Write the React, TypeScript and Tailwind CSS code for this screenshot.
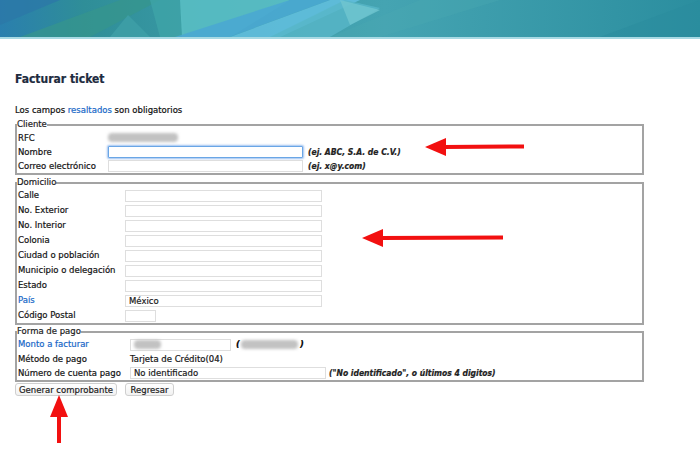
import React from "react";

const font = { fontFamily: '"DejaVu Sans", "Liberation Sans", sans-serif' };
const cond = { fontFamily: '"DejaVu Sans Condensed", "DejaVu Sans", sans-serif' };

function Blur({ w, className = "" }: { w: number; className?: string }) {
  return (
    <span
      className={"inline-block h-[9px] bg-[#c2c2c2] blur-[1.5px] rounded-sm " + className}
      style={{ width: w }}
    />
  );
}

function Banner() {
  return (
    <div className="relative h-[39px] w-full">
      <svg width="700" height="37" viewBox="0 0 700 37" preserveAspectRatio="none" className="block">
        <defs>
          <linearGradient id="bg" x1="0" y1="0" x2="1" y2="0">
            <stop offset="0" stopColor="#2a7fae" />
            <stop offset="0.12" stopColor="#2f8e98" />
            <stop offset="0.3" stopColor="#3a9aa6" />
            <stop offset="0.55" stopColor="#45a4b2" />
            <stop offset="1" stopColor="#2b8e9f" />
          </linearGradient>
        </defs>
        <rect x="0" y="0" width="700" height="37" fill="url(#bg)" />
        <polygon points="0,0 60,0 0,25" fill="#2c78a8" opacity="0.8" />
        <polygon points="20,37 120,0 160,0 90,37" fill="#36968c" opacity="0.7" />
        <polygon points="110,37 128,15 150,37" fill="#3fa0a8" opacity="0.8" />
        <polygon points="150,0 180,0 185,37 160,37" fill="#3ea4a8" opacity="0.8" />
        <polygon points="180,0 290,0 230,37 182,37" fill="#5bbfc6" opacity="0.85" />
        <polygon points="175,37 290,0 330,0 230,37" fill="#4aa9d2" opacity="0.9" />
        <polygon points="230,37 330,0 360,0 280,37" fill="#63c0df" opacity="0.85" />
        <polygon points="270,37 345,0 380,8 330,37" fill="#58b7c8" opacity="0.8" />
        <polygon points="340,0 380,10 350,25" fill="#70c6cf" opacity="0.8" />
        <polygon points="330,37 420,0 500,0 380,37" fill="#4aa8b2" opacity="0.35" />
        <polygon points="600,37 700,0 700,37" fill="#2a8c9e" opacity="0.5" />
      </svg>
      <div className="h-[2px] w-full bg-[#a8dae4]" />
    </div>
  );
}

function Input({ w, focus = false, children }: { w: number; focus?: boolean; children?: React.ReactNode }) {
  return (
    <div
      className={
        "h-[12px] flex items-center px-[3px] text-[8.5px] leading-[10px] text-[#1a1a1a] bg-white " +
        (focus
          ? "border border-[#6aa6e6] shadow-[0_0_2px_1px_rgba(90,150,230,0.6)] rounded-[1px]"
          : "border border-[#dedede]")
      }
      style={{ width: w }}
    >
      {children}
    </div>
  );
}

function Row({
  label,
  labelW,
  h = 15,
  blue = false,
  className = "items-center",
  children,
}: {
  label: string;
  labelW: number;
  h?: number;
  blue?: boolean;
  className?: string;
  children?: React.ReactNode;
}) {
  return (
    <div className={"flex " + className} style={{ height: h }}>
      <div
        className={"shrink-0 pl-[1px] " + (blue ? "text-[#1868c8]" : "text-[#141414]")}
        style={{ width: labelW }}
      >
        {label}
      </div>
      {children}
    </div>
  );
}

function Hint({ children, className = "" }: { children: React.ReactNode; className?: string }) {
  return (
    <span className={"italic font-semibold text-[#222] text-[8.5px] " + className} style={cond}>
      {children}
    </span>
  );
}

function Arrow({ x, y, len, dir }: { x: number; y: number; len: number; dir: "left" | "up" }) {
  if (dir === "left") {
    return (
      <svg className="absolute" style={{ left: x, top: y - 10 }} width={len} height={20} viewBox={`0 0 ${len} 20`}>
        <line x1="18" y1="10" x2={len} y2="9.5" stroke="#f21010" strokeWidth="4" />
        <polygon points="0,10 21,1 21,19" fill="#f21010" />
      </svg>
    );
  }
  return (
    <svg className="absolute" style={{ left: x - 10, top: y }} width={20} height={len} viewBox={`0 0 20 ${len}`}>
      <line x1="10" y1="18" x2="10" y2={len} stroke="#f21010" strokeWidth="4" />
      <polygon points="10,0 1,22 19,22" fill="#f21010" />
    </svg>
  );
}

export default function App() {
  return (
    <div className="relative w-[700px] h-[457px] overflow-hidden bg-white" style={font}>
      <Banner />
      <div className="px-[15px] text-[8.5px] leading-[11px] [-webkit-text-stroke:0.2px]">
        <h1 className="mt-[33px] text-[12px] leading-[14px] font-bold text-[#1d2b3e]" style={cond}>
          Facturar ticket
        </h1>
        <p className="mt-[19px] text-[8.5px] leading-[11px] text-[#111]">
          Los campos <span className="text-[#1868c8]">resaltados</span> son obligatorios
        </p>

        <fieldset className="mt-[3px] w-[629px] border-2 border-[#a3a3a3]">
          <legend className="text-[8.5px] leading-[11px] text-[#222]">Cliente</legend>
          <Row label="RFC" labelW={91} h={15} className="items-end pb-[1px]">
            <Blur w={70} className="mb-[2px]" />
          </Row>
          <Row label="Nombre" labelW={91} h={14}>
            <Input w={195} focus />
            <Hint className="ml-[5px]">(ej. ABC, S.A. de C.V.)</Hint>
          </Row>
          <Row label="Correo electrónico" labelW={91} h={14}>
            <Input w={195} />
            <Hint className="ml-[5px]">(ej. x@y.com)</Hint>
          </Row>
        </fieldset>

        <fieldset className="mt-[2px] w-[629px] border-2 border-[#a3a3a3]">
          <legend className="text-[8.5px] leading-[11px] text-[#222]">Domicilio</legend>
          <Row label="Calle" labelW={108}>
            <Input w={197} />
          </Row>
          <Row label="No. Exterior" labelW={108}>
            <Input w={197} />
          </Row>
          <Row label="No. Interior" labelW={108}>
            <Input w={197} />
          </Row>
          <Row label="Colonia" labelW={108}>
            <Input w={197} />
          </Row>
          <Row label="Ciudad o población" labelW={108}>
            <Input w={197} />
          </Row>
          <Row label="Municipio o delegación" labelW={108}>
            <Input w={197} />
          </Row>
          <Row label="Estado" labelW={108}>
            <Input w={197} />
          </Row>
          <Row label="País" labelW={108} blue>
            <Input w={197}>México</Input>
          </Row>
          <Row label="Código Postal" labelW={108}>
            <Input w={31} />
          </Row>
        </fieldset>

        <fieldset className="mt-[1px] w-[629px] border-2 border-[#a3a3a3]">
          <legend className="text-[8.5px] leading-[11px] text-[#222]">Forma de pago</legend>
          <Row label="Monto a facturar" labelW={113} blue>
            <Input w={101}>
              <Blur w={27} />
            </Input>
            <span className="ml-[5px] italic font-semibold">(</span>
            <Blur w={57} className="ml-[1px]" />
            <span className="ml-[2px] italic font-semibold">)</span>
          </Row>
          <Row label="Método de pago" labelW={113} h={14}>
            <span className="text-[#141414]">Tarjeta de Crédito(04)</span>
          </Row>
          <Row label="Número de cuenta pago" labelW={113} h={14}>
            <Input w={196}>No identificado</Input>
            <Hint className="ml-[3px]">("No identificado", o últimos 4 digitos)</Hint>
          </Row>
        </fieldset>

        <div className="mt-[1px] flex gap-[8px]">
          <button className="h-[13px] w-[102px] flex items-center justify-center rounded-[3px] border border-[#cfcfcf] bg-gradient-to-b from-white to-[#f1f1f1] text-[8.5px] leading-[10px] text-[#222]">
            Generar comprobante
          </button>
          <button className="h-[13px] w-[49px] flex items-center justify-center rounded-[3px] border border-[#cfcfcf] bg-gradient-to-b from-white to-[#f1f1f1] text-[8.5px] leading-[10px] text-[#222]">
            Regresar
          </button>
        </div>
      </div>

      <Arrow x={425} y={147} len={99} dir="left" />
      <Arrow x={362} y={238} len={141} dir="left" />
      <Arrow x={59} y={395} len={48} dir="up" />
    </div>
  );
}
